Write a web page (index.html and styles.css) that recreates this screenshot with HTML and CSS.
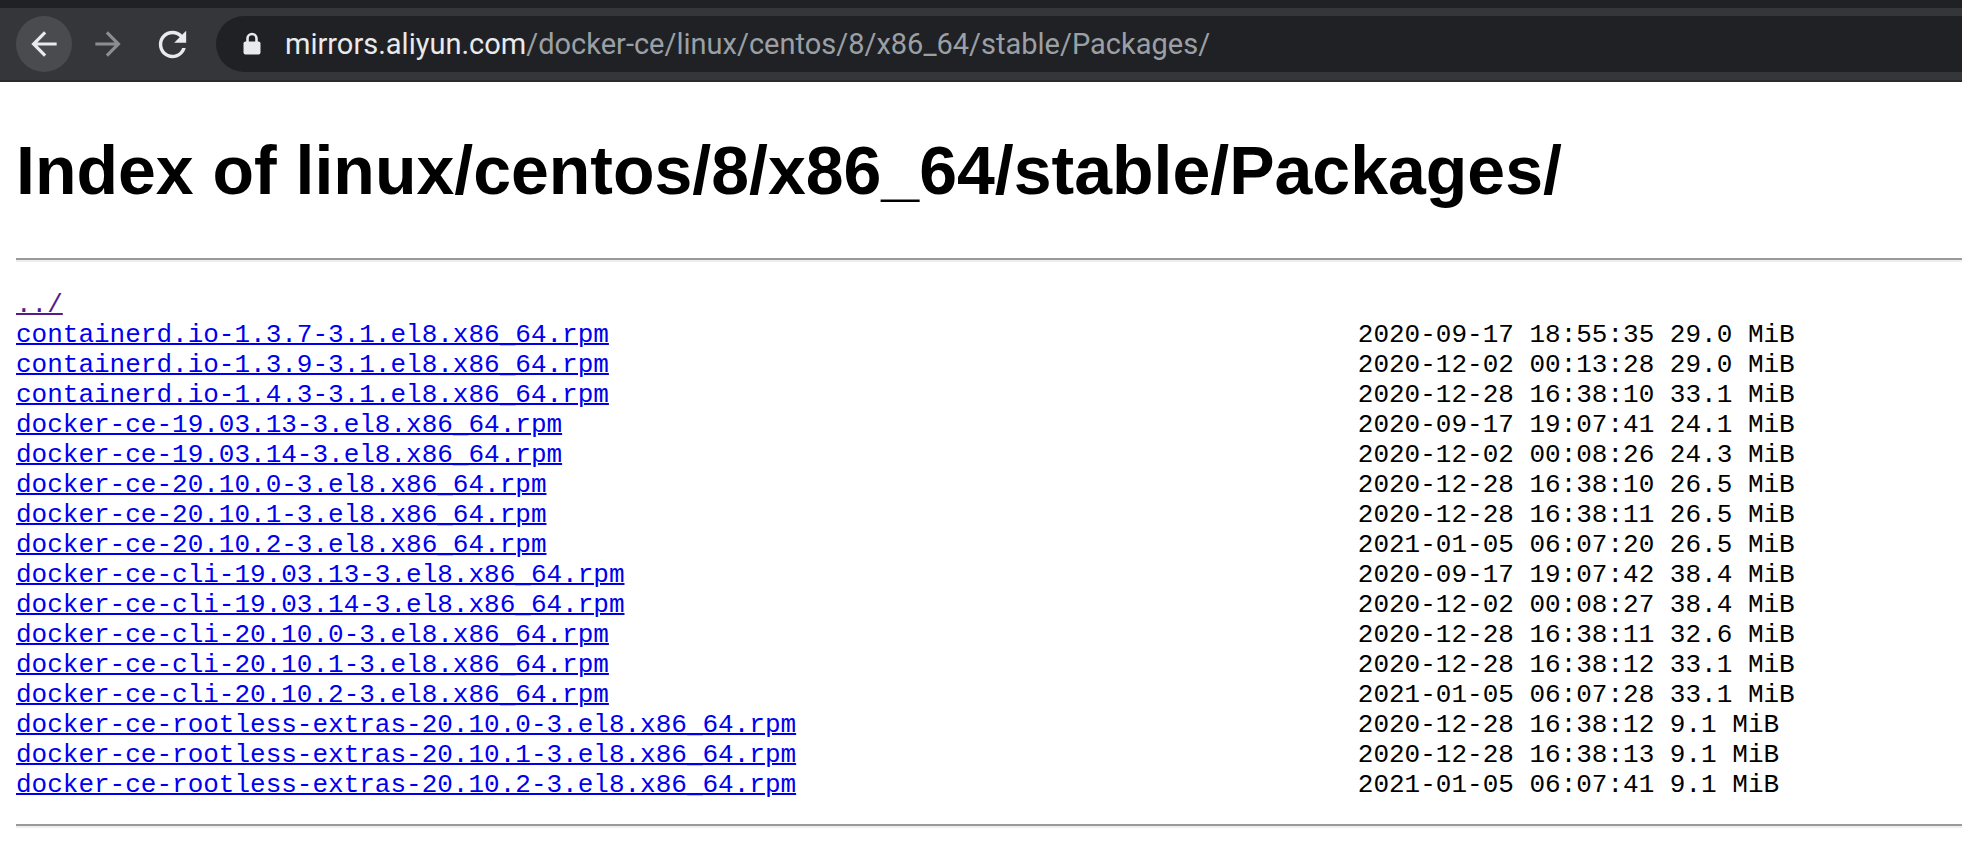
FILE: index.html
```html
<!DOCTYPE html>
<html>
<head>
<meta charset="utf-8">
<title>Index of linux/centos/8/x86_64/stable/Packages/</title>
<link rel="stylesheet" href="styles.css">
</head>
<body>
<header class="toolbar">
  <div class="nav-btn nav-btn-active">
    <svg class="icon-arrow" viewBox="0 0 24 24"><path fill="#e8eaed" d="M20 11H7.83l5.59-5.59L12 4l-8 8 8 8 1.41-1.41L7.83 13H20v-2z"/></svg>
  </div>
  <div class="nav-btn">
    <svg class="icon-arrow" viewBox="0 0 24 24"><path fill="#8c8d90" d="M12 4l-1.41 1.41L16.17 11H4v2h12.17l-5.58 5.59L12 20l8-8z"/></svg>
  </div>
  <div class="nav-btn">
    <svg class="icon-reload" viewBox="0 0 24 24"><path fill="#e8eaed" d="M17.65 6.35C16.2 4.9 14.21 4 12 4c-4.42 0-7.99 3.58-7.99 8s3.57 8 7.99 8c3.73 0 6.84-2.55 7.73-6h-2.08c-.82 2.33-3.04 4-5.65 4-3.31 0-6-2.69-6-6s2.69-6 6-6c1.66 0 3.14.69 4.22 1.78L13 11h7V4l-2.35 2.35z"/></svg>
  </div>
  <div class="omnibox">
    <svg class="icon-lock" viewBox="0 0 18 23"><path d="M4.5 10V6.5a4.5 4.5 0 0 1 9 0V10" fill="none" stroke="#e8eaed" stroke-width="2.6"/><rect x="0.5" y="9.5" width="17" height="13" rx="2" fill="#e8eaed"/></svg>
    <span class="url"><span class="url-host">mirrors.aliyun.com</span><span class="url-path">/docker-ce/linux/centos/8/x86_64/stable/Packages/</span></span>
  </div>
</header>
<main class="page">
  <h1 class="title">Index of linux/centos/8/x86_64/stable/Packages/</h1>
  <hr class="rule">
  <div class="listing">
    <div class="row"><a class="visited" href="#">../</a><span></span></div>
    <div class="row"><a href="#">containerd.io-1.3.7-3.1.el8.x86_64.rpm</a><span>2020-09-17 18:55:35 29.0 MiB</span></div>
    <div class="row"><a href="#">containerd.io-1.3.9-3.1.el8.x86_64.rpm</a><span>2020-12-02 00:13:28 29.0 MiB</span></div>
    <div class="row"><a href="#">containerd.io-1.4.3-3.1.el8.x86_64.rpm</a><span>2020-12-28 16:38:10 33.1 MiB</span></div>
    <div class="row"><a href="#">docker-ce-19.03.13-3.el8.x86_64.rpm</a><span>2020-09-17 19:07:41 24.1 MiB</span></div>
    <div class="row"><a href="#">docker-ce-19.03.14-3.el8.x86_64.rpm</a><span>2020-12-02 00:08:26 24.3 MiB</span></div>
    <div class="row"><a href="#">docker-ce-20.10.0-3.el8.x86_64.rpm</a><span>2020-12-28 16:38:10 26.5 MiB</span></div>
    <div class="row"><a href="#">docker-ce-20.10.1-3.el8.x86_64.rpm</a><span>2020-12-28 16:38:11 26.5 MiB</span></div>
    <div class="row"><a href="#">docker-ce-20.10.2-3.el8.x86_64.rpm</a><span>2021-01-05 06:07:20 26.5 MiB</span></div>
    <div class="row"><a href="#">docker-ce-cli-19.03.13-3.el8.x86_64.rpm</a><span>2020-09-17 19:07:42 38.4 MiB</span></div>
    <div class="row"><a href="#">docker-ce-cli-19.03.14-3.el8.x86_64.rpm</a><span>2020-12-02 00:08:27 38.4 MiB</span></div>
    <div class="row"><a href="#">docker-ce-cli-20.10.0-3.el8.x86_64.rpm</a><span>2020-12-28 16:38:11 32.6 MiB</span></div>
    <div class="row"><a href="#">docker-ce-cli-20.10.1-3.el8.x86_64.rpm</a><span>2020-12-28 16:38:12 33.1 MiB</span></div>
    <div class="row"><a href="#">docker-ce-cli-20.10.2-3.el8.x86_64.rpm</a><span>2021-01-05 06:07:28 33.1 MiB</span></div>
    <div class="row"><a href="#">docker-ce-rootless-extras-20.10.0-3.el8.x86_64.rpm</a><span>2020-12-28 16:38:12 9.1 MiB</span></div>
    <div class="row"><a href="#">docker-ce-rootless-extras-20.10.1-3.el8.x86_64.rpm</a><span>2020-12-28 16:38:13 9.1 MiB</span></div>
    <div class="row"><a href="#">docker-ce-rootless-extras-20.10.2-3.el8.x86_64.rpm</a><span>2021-01-05 06:07:41 9.1 MiB</span></div>
  </div>
  <hr class="rule">
</main>
</body>
</html>
```
FILE: styles.css
```css
html, body {
  margin: 0;
  padding: 0;
  background: #ffffff;
}
body {
  overflow: hidden;
}
.toolbar {
  display: flex;
  align-items: center;
  gap: 8px;
  height: 72px;
  padding-left: 16px;
  background: #35363a;
  border-top: 8px solid #202124;
  border-bottom: 2px solid #2a2b2e;
  overflow: hidden;
}
.nav-btn {
  flex: 0 0 56px;
  width: 56px;
  height: 56px;
  border-radius: 50%;
  display: flex;
  align-items: center;
  justify-content: center;
}
.nav-btn-active {
  background: #4a4b4f;
}
.icon-arrow {
  width: 38px;
  height: 38px;
}
.icon-reload {
  width: 41px;
  height: 41px;
  margin-left: 1px;
}
.omnibox {
  flex: 1 0 auto;
  margin-left: 8px;
  height: 56px;
  border-radius: 28px 0 0 28px;
  background: #202124;
  display: flex;
  align-items: center;
  padding-left: 27px;
}
.icon-lock {
  width: 18px;
  height: 23px;
  margin-top: -1px;
}
.url {
  margin-left: 24px;
  font-family: Roboto, "Liberation Sans", sans-serif;
  font-size: 29px;
  white-space: nowrap;
}
.url-host {
  color: #e8eaed;
}
.url-path {
  color: #9aa0a6;
}
.page {
  padding-left: 16px;
}
.title {
  margin: 51px 0 51px;
  font-family: "Liberation Sans", Arial, sans-serif;
  font-weight: 700;
  font-size: 68px;
  line-height: 74px;
  color: #000;
  white-space: nowrap;
}
.rule {
  margin: 0;
  height: 0;
  border: 0;
  border-top: 2px solid #9a9a9a;
  border-bottom: 2px solid #eeeeee;
}
.listing {
  margin: 28px 0 24px;
  font-family: "Liberation Mono", "Courier New", monospace;
  font-size: 26px;
  line-height: 30px;
  color: #000;
}
.row {
  display: grid;
  grid-template-columns: 86ch auto;
  white-space: pre;
}
.row a {
  color: #0000ee;
  text-decoration: underline;
  text-decoration-thickness: 2px;
  justify-self: start;
}
.row a.visited {
  color: #551a8b;
}
```
